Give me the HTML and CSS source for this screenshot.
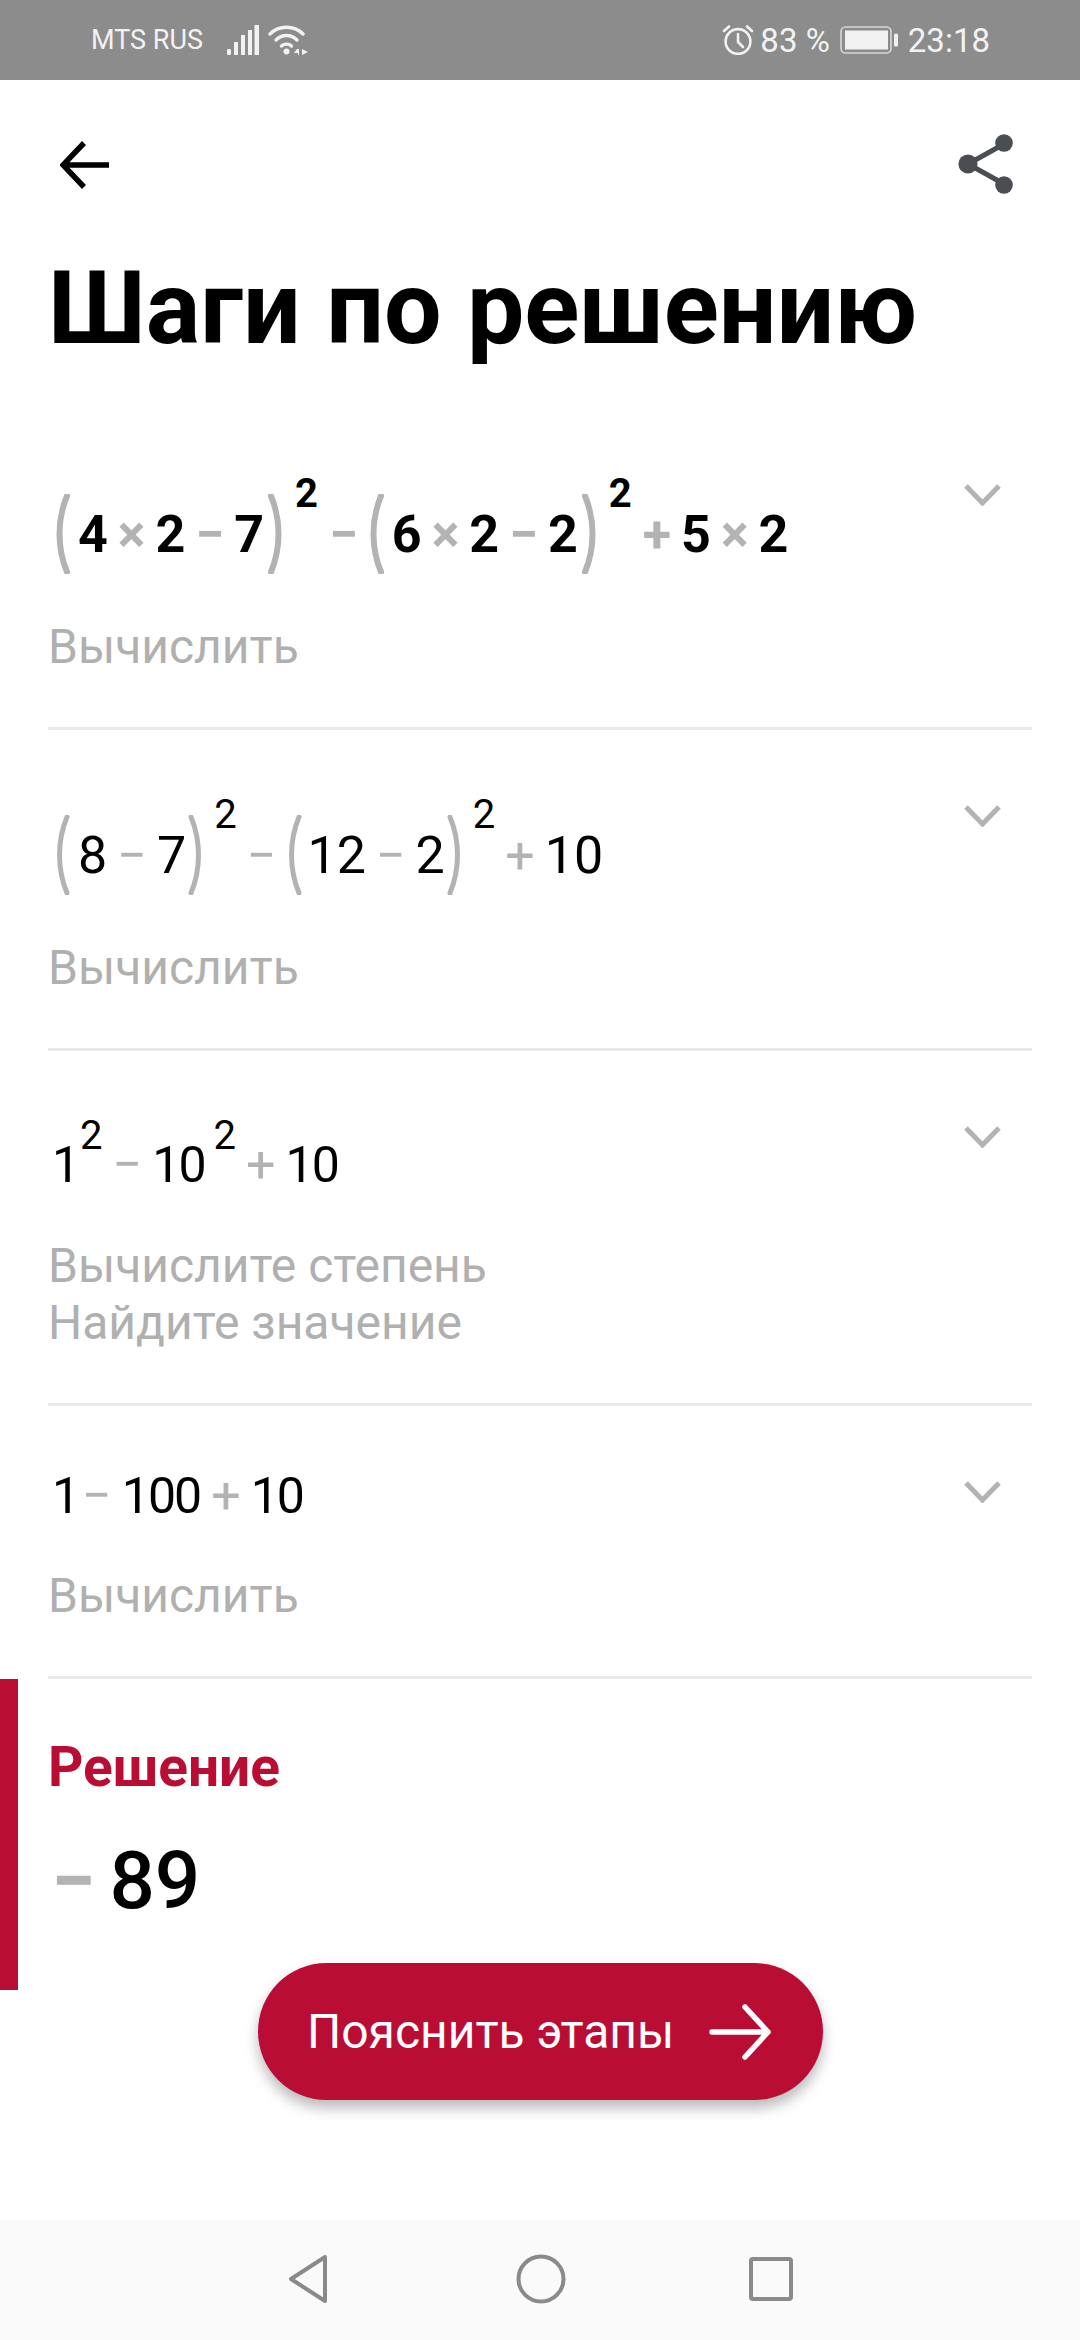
FILE: index.html
```html
<!DOCTYPE html>
<html lang="ru">
<head>
<meta charset="utf-8">
<title>Шаги по решению</title>
<link rel="stylesheet" href="styles.css">
</head>
<body>
<div class="page">
  <header class="status">
    <div class="status-left">
      <span class="carrier">MTS RUS</span>
      <svg class="ic-signal" width="32" height="30" viewBox="0 0 32 30"><g fill="#f2f2f2"><rect x="0" y="24" width="4" height="6" rx="1"/><rect x="7" y="17" width="4" height="13"/><rect x="14" y="10" width="4" height="20"/><rect x="21" y="5" width="4" height="25"/><rect x="27.5" y="0" width="4.5" height="30"/></g></svg>
      <svg class="ic-wifi" width="42" height="30" viewBox="0 0 42 30"><g fill="none" stroke="#f2f2f2" stroke-width="3.4" stroke-linecap="round"><path d="M2 9C11 0 26 0 35 9"/><path d="M8 15C14 9 23 9 29 15"/><path d="M13.5 21C16 18.5 21 18.5 23.5 21"/></g><circle cx="18.5" cy="26.5" r="3" fill="#f2f2f2"/><path d="M29 24l-3 4h4v2h1v-6zM34 24v6l6-3z" fill="#f2f2f2"/></svg>
    </div>
    <div class="status-right">
      <svg class="ic-alarm" width="32" height="30" viewBox="0 0 32 30"><g fill="none" stroke="#f2f2f2" stroke-width="2.6" stroke-linecap="round"><circle cx="16" cy="16.5" r="12.4"/><path d="M16 9v8l5 5"/><path d="M2 6l5-4.5M30 6l-5-4.5"/></g></svg>
      <span class="pct">83 %</span>
      <svg class="ic-batt" width="58" height="28" viewBox="0 0 58 28"><rect x="1" y="1" width="50" height="26" rx="4.5" fill="none" stroke="#d8d8d8" stroke-width="1.6"/><rect x="5" y="4.5" width="43" height="19" fill="#f2f2f2"/><rect x="54" y="7.5" width="4" height="13" rx="1.6" fill="#f2f2f2"/></svg>
      <span class="time">23:18</span>
    </div>
  </header>

  <div class="toolbar">
    <svg class="ic-back" width="49" height="48" viewBox="0 0 49 48"><path d="M24 2L3 24l21 22M3 24h46" fill="none" stroke="#000" stroke-width="5.500"/></svg>
    <svg class="ic-share" width="56" height="60" viewBox="0 0 56 60"><path d="M46 10L10 30l36 20" fill="none" stroke="#4a4d52" stroke-width="5"/><circle cx="46" cy="9" r="8.8" fill="#4a4d52"/><circle cx="10" cy="30" r="9.6" fill="#4a4d52"/><circle cx="46" cy="51" r="8.8" fill="#4a4d52"/></svg>
  </div>

  <h1 class="title">Шаги по решению</h1>

  <main class="steps">
    <section class="step">
      <div class="step-body">
        <div class="math math-bold"><svg class="paren" width="16" height="80" viewBox="0 0 16 80"><path d="M13 2C3 26 3 54 13 78" fill="none" stroke="#b3b3b3" stroke-width="6" stroke-linecap="round"/></svg><span class="n n-first">4</span><span class="op">×</span><span class="n">2</span><span class="op">−</span><span class="n">7</span><svg class="paren paren-close" width="16" height="80" viewBox="0 0 16 80"><path d="M3 2C13 26 13 54 3 78" fill="none" stroke="#b3b3b3" stroke-width="6" stroke-linecap="round"/></svg><span class="sup">2</span><span class="op op-after">−</span><svg class="paren" width="16" height="80" viewBox="0 0 16 80"><path d="M13 2C3 26 3 54 13 78" fill="none" stroke="#b3b3b3" stroke-width="6" stroke-linecap="round"/></svg><span class="n n-first">6</span><span class="op">×</span><span class="n">2</span><span class="op">−</span><span class="n">2</span><svg class="paren paren-close" width="16" height="80" viewBox="0 0 16 80"><path d="M3 2C13 26 13 54 3 78" fill="none" stroke="#b3b3b3" stroke-width="6" stroke-linecap="round"/></svg><span class="sup">2</span><span class="op op-after">+</span><span class="n">5</span><span class="op">×</span><span class="n">2</span></div>
        <p class="hint">Вычислить</p>
      </div>
      <svg class="chev" width="37" height="22" viewBox="0 0 37 22"><path d="M2 2l16.500 17L35 2" fill="none" stroke="#b3b3b3" stroke-width="5"/></svg>
    </section>

    <section class="step">
      <div class="step-body">
        <div class="math math-regular"><svg class="paren" width="16" height="80" viewBox="0 0 16 80"><path d="M13 2C3 26 3 54 13 78" fill="none" stroke="#b3b3b3" stroke-width="5" stroke-linecap="round"/></svg><span class="n n-first">8</span><span class="op">−</span><span class="n">7</span><svg class="paren paren-close" width="16" height="80" viewBox="0 0 16 80"><path d="M3 2C13 26 13 54 3 78" fill="none" stroke="#b3b3b3" stroke-width="5" stroke-linecap="round"/></svg><span class="sup">2</span><span class="op op-after">−</span><svg class="paren" width="16" height="80" viewBox="0 0 16 80"><path d="M13 2C3 26 3 54 13 78" fill="none" stroke="#b3b3b3" stroke-width="5" stroke-linecap="round"/></svg><span class="n n-first-tight">12</span><span class="op">−</span><span class="n">2</span><svg class="paren paren-close" width="16" height="80" viewBox="0 0 16 80"><path d="M3 2C13 26 13 54 3 78" fill="none" stroke="#b3b3b3" stroke-width="5" stroke-linecap="round"/></svg><span class="sup">2</span><span class="op op-after">+</span><span class="n">10</span></div>
        <p class="hint">Вычислить</p>
      </div>
      <svg class="chev" width="37" height="22" viewBox="0 0 37 22"><path d="M2 2l16.500 17L35 2" fill="none" stroke="#b3b3b3" stroke-width="5"/></svg>
    </section>

    <section class="step">
      <div class="step-body">
        <div class="math math-plain"><span class="n n-one">1</span><span class="sup sup-low">2</span><span class="op op-after">−</span><span class="n">10</span><span class="sup sup-low">2</span><span class="op op-after">+</span><span class="n">10</span></div>
        <p class="hint hint-two">Вычислите степень<br>Найдите значение</p>
      </div>
      <svg class="chev" width="37" height="22" viewBox="0 0 37 22"><path d="M2 2l16.500 17L35 2" fill="none" stroke="#b3b3b3" stroke-width="5"/></svg>
    </section>

    <section class="step">
      <div class="step-body">
        <div class="math math-plain"><span class="n n-one">1</span><span class="op">−</span><span class="n">100</span><span class="op">+</span><span class="n">10</span></div>
        <p class="hint hint-tight">Вычислить</p>
      </div>
      <svg class="chev" width="37" height="22" viewBox="0 0 37 22"><path d="M2 2l16.500 17L35 2" fill="none" stroke="#b3b3b3" stroke-width="5"/></svg>
    </section>
  </main>

  <section class="solution">
    <h2 class="solution-label">Решение</h2>
    <div class="answer"><span class="answer-minus">−</span><span>89</span></div>
  </section>

  <button class="cta" type="button">
    <span>Пояснить этапы</span>
    <svg width="62" height="56" viewBox="0 0 62 56"><path d="M3 28h56M36 3l23 25-23 25" fill="none" stroke="#fff" stroke-width="5.500" stroke-linecap="round" stroke-linejoin="round"/></svg>
  </button>

  <nav class="navbar">
    <svg width="42" height="50" viewBox="0 0 42 50"><path d="M38 3L4 25l34 22z" fill="none" stroke="#8a8a8a" stroke-width="4" stroke-linejoin="round"/></svg>
    <svg width="50" height="50" viewBox="0 0 50 50"><circle cx="25" cy="25" r="22.500" fill="none" stroke="#8a8a8a" stroke-width="4"/></svg>
    <svg class="nav-square" width="44" height="44" viewBox="0 0 44 44"><rect x="2" y="2" width="40" height="40" rx="2" fill="none" stroke="#8a8a8a" stroke-width="4"/></svg>
  </nav>
</div>
</body>
</html>
```
FILE: styles.css
```css
* { box-sizing: border-box; }
html, body { margin: 0; padding: 0; background: #fff; }
body { font-family: Roboto, "Noto Sans", sans-serif; color: #000; }

.page {
  position: relative;
  width: 1080px;
  height: 2340px;
  display: flex;
  flex-direction: column;
  overflow: hidden;
}

/* status bar */
.status {
  flex: none;
  height: 80px;
  background: #8c8c8c;
  color: #f2f2f2;
  display: flex;
  justify-content: space-between;
  align-items: center;
  padding: 0 90px 0 91px;
}
.status-left, .status-right { display: flex; align-items: center; }
.carrier { font-size: 27px; margin-right: 24px; }
.ic-wifi { margin-left: 9px; }
.ic-alarm { margin-right: 6px; }
.pct { font-size: 33px; margin-right: 10px; }
.time { font-size: 33px; margin-left: 10px; }

/* toolbar + title */
.toolbar {
  flex: none;
  height: 173px;
  padding: 54px 66px 0 60px;
  display: flex;
  justify-content: space-between;
  align-items: flex-start;
}
.ic-back { margin-top: 7px; }
.title {
  flex: none;
  margin: 0 0 46px 48px;
  font-size: 102px;
  line-height: 110px;
  font-weight: 700;
  white-space: nowrap;
}

/* steps */
.steps { flex: none; margin: 0 48px; }
.step {
  display: flex;
  justify-content: space-between;
  align-items: flex-start;
  padding-top: 60px;
  padding-bottom: 52px;
  border-bottom: 3px solid #e9e9e9;
}
.step-body { flex: 1; }
.chev { flex: none; margin: 15px 31px 0 0; }

.math {
  font-size: 52px;
  line-height: 60px;
  white-space: nowrap;
  padding-left: 6px;
}
.math-bold { font-weight: 700; }
.n { display: inline-block; }
.n-first { margin-left: 8px; }
.n-first-tight { margin-left: 5px; }
.n-one { margin-right: -7px; }
.op { display: inline-block; color: #b3b3b3; margin: 0 10px; }
.op-after { margin-left: 11px; }
.paren { vertical-align: -22px; }
.paren-close { margin-left: 2px; }
.math-bold .paren-close { margin-left: 4px; }
.sup {
  display: inline-block;
  font-size: 40px;
  line-height: 50px;
  vertical-align: 45px;
  margin-left: 11px;
}
.math-regular .sup { margin-left: 10px; }
.math-regular .op-after { margin-left: 10px; }
.math-plain { padding-left: 4px; }
.math-plain .n { font-size: 50px; letter-spacing: -2px; }
.math-plain .op { margin-right: 10px; margin-left: 11px; }
.math-plain .op-after { margin-left: 10px; }
.math-plain .sup-low { vertical-align: 33px; margin-left: 9px; }

.hint {
  margin: 44px 0 0;
  font-size: 48px;
  line-height: 57px;
  color: #b0b0b0;
}
.hint-two { margin-top: 42px; }
.hint-tight { margin-top: 41px; }

/* solution */
.solution {
  flex: none;
  border-left: 18px solid #ba0d33;
  padding: 58px 0 64px 30px;
}
.solution-label {
  margin: 0 0 39px;
  font-size: 55px;
  line-height: 60px;
  font-weight: 700;
  color: #ba0d33;
}
.answer {
  font-size: 80px;
  line-height: 90px;
  font-weight: 500;
  white-space: nowrap;
  padding-left: 3px;
}
.answer-minus { color: #b3b3b3; font-weight: 700; margin-right: 14px; }

/* floating button */
.cta {
  position: absolute;
  left: 258px;
  top: 1963px;
  width: 565px;
  height: 137px;
  border: 0;
  border-radius: 69px;
  background: #ba0d33;
  color: #fff;
  font-family: inherit;
  font-size: 48px;
  display: flex;
  align-items: center;
  justify-content: flex-start;
  gap: 35px;
  padding: 0 0 0 49px;
  box-shadow: 0 8px 14px rgba(0, 0, 0, 0.28);
}

/* nav bar */
.navbar {
  margin-top: auto;
  height: 120px;
  background: #fafafa;
  display: flex;
  align-items: center;
  justify-content: center;
  gap: 187px;
  padding-bottom: 2px;
}
.nav-square { margin-left: -4px; }
```
